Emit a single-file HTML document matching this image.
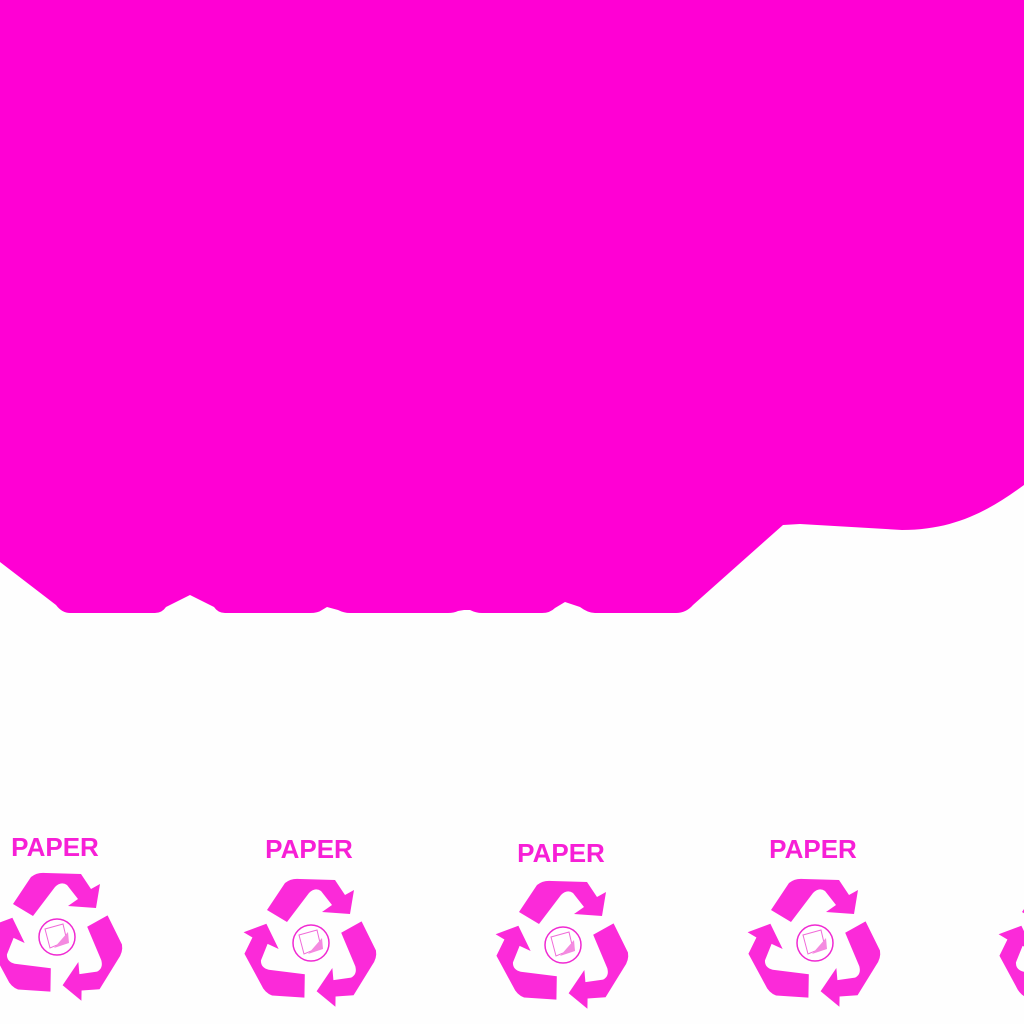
<!DOCTYPE html>
<html><head><style>
html,body{margin:0;padding:0;width:1024px;height:1024px;overflow:hidden;background:#fefefe}
svg{position:absolute;left:0;top:0}
text{font-family:"Liberation Sans",sans-serif;font-size:26px;fill:#f71fd6;text-anchor:middle}
</style></head><body>
<svg width="1024" height="1024" viewBox="0 0 1024 1024">
<defs>
<g id="arrow">
<path d="M-44,-33 L-26,-60 Q-20,-65 -11,-64 L24,-63 L34,-48 L43,-53 L39,-29 L11,-31 L21,-38 L10,-52 Q4,-56 -2,-50 L-24,-21 Z" fill="#fb2ad9"/>
</g>
<g id="icon">
<use href="#arrow"/>
<use href="#arrow" transform="rotate(120)"/>
<use href="#arrow" transform="rotate(240)"/>
<circle r="18" fill="#fff" stroke="#f02ad2" stroke-width="1.5"/>
<path d="M-12,-8 L6,-13 L10,4 L-7,11 Z" fill="none" stroke="#f06ad8" stroke-width="1"/>
<path d="M-3,11 L11,-5 L12,6 Z" fill="#f48ae0"/>
</g>
</defs>
<path d="M0,0 H1024 V485 C990,510 955,530 902,530 L800,524 L783,525 L693,605 Q686,613 676,613 L595,613 Q588,613 580,607 L565,602 L555,608 Q550,613 542,613 L482,613 Q476,613 470,610 L464,610 L458,611 Q454,613 448,613 L350,613 Q344,613 338,610 L327,607 L322,610 Q318,613 310,613 L225,613 Q218,613 214,607 L190,595 L166,607 Q162,613 155,613 L70,613 Q62,613 56,605 L0,562 Z" fill="#ff00d4"/>
<text x="55" y="856" font-weight="bold">PAPER</text>
<text x="309" y="858" font-weight="bold">PAPER</text>
<text x="561" y="862" font-weight="bold">PAPER</text>
<text x="813" y="858" font-weight="bold">PAPER</text>
<use href="#icon" transform="translate(57,937)"/>
<use href="#icon" transform="translate(311,943)"/>
<use href="#icon" transform="translate(563,945)"/>
<use href="#icon" transform="translate(815,943)"/>
<use href="#icon" transform="translate(1066,945)"/>
</svg>
</body></html>
